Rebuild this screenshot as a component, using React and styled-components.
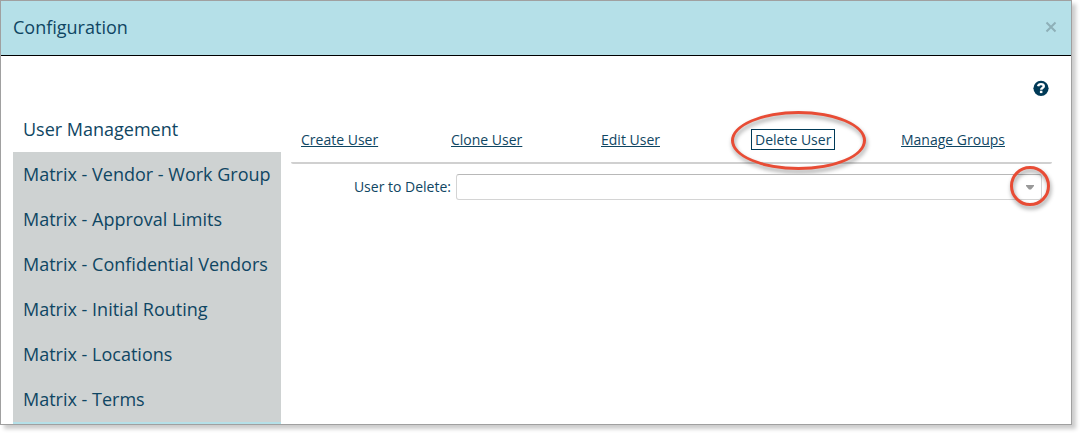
import React, { useState } from "react";
import styled, { createGlobalStyle } from "styled-components";

const GlobalStyle = createGlobalStyle`
  * {
    box-sizing: border-box;
  }

  body {
    margin: 0;
    background: #fff;
    color: #0f4663;
    font-family: "Open Sans", "Noto Sans", sans-serif;
  }
`;

const Dialog = styled.section`
  margin: 0 10px 10px 0;
  border: 1px solid #a0a0a0;
  background: #fff;
  box-shadow: 4px 4px 4px rgba(0, 0, 0, 0.2);
`;

const Header = styled.header`
  display: flex;
  align-items: center;
  justify-content: space-between;
  height: 55px;
  padding: 0 14px 2px 12px;
  background: #b5e0e8;
  border-bottom: 1px solid #000;
`;

const Title = styled.h1`
  margin: 0;
  font-size: 18px;
  font-weight: 400;
  line-height: 24px;
`;

const CloseButton = styled.button`
  display: flex;
  padding: 0;
  border: none;
  background: transparent;
  cursor: pointer;
`;

const Toolbar = styled.div`
  display: flex;
  justify-content: flex-end;
  padding: 24px 22px 11px;
`;

const HelpButton = styled(CloseButton)``;

const Content = styled.div`
  display: flex;
  gap: 10px;
  padding: 0 19px 0 12px;
`;

const SideNav = styled.nav`
  flex: 0 0 268px;
  border-bottom: 2px solid #b5e0e8;
`;

const SideLink = styled.a`
  display: block;
  padding: 10px;
  background: ${(props) => (props.$active ? "#fff" : "#ced2d2")};
  color: inherit;
  font-size: 18px;
  line-height: 25px;
  text-decoration: none;
  white-space: nowrap;
`;

const Main = styled.main`
  flex: 1;
  min-width: 0;
`;

const Tabs = styled.nav`
  display: flex;
  padding: 21px 0 12px 10px;
  border-bottom: 2px solid #d0d0d0;
  border-radius: 2px;
`;

const Tab = styled.div`
  position: relative;
  flex: 0 1 150px;
`;

const TabLink = styled.a`
  display: inline-block;
  padding: ${(props) => (props.$active ? "0 3px" : "1px 0")};
  border: ${(props) => (props.$active ? "1px solid #003a57" : "none")};
  color: inherit;
  font-size: 14px;
  line-height: 19px;
  text-decoration: ${(props) => (props.$active ? "none" : "underline")};
  white-space: nowrap;
`;

const Field = styled.div`
  display: flex;
  align-items: center;
  gap: 5px;
  padding: 10px 10px 0 0;
`;

const Label = styled.label`
  flex: 0 0 160px;
  font-size: 14px;
  line-height: 20px;
  text-align: right;
`;

const SelectBox = styled.div`
  position: relative;
  flex: 1;
`;

const Select = styled.select`
  display: block;
  width: 100%;
  height: 26px;
  padding: 0 24px 0 6px;
  appearance: none;
  border: 1px solid #d4d4d4;
  border-top-color: #b8b8b8;
  border-radius: 3px;
  background: #fff;
  color: inherit;
  font: inherit;
  font-size: 14px;
`;

const Arrow = styled.svg`
  position: absolute;
  top: 11px;
  right: 8px;
  pointer-events: none;
`;

// Red ring drawn over the control it points out
const Ring = styled.span`
  position: absolute;
  top: ${(props) => props.$top}px;
  ${(props) => props.$side}: ${(props) => props.$offset}px;
  width: ${(props) => props.$width}px;
  height: ${(props) => props.$height}px;
  border: 3px solid #e84c35;
  border-radius: 50%;
  filter: drop-shadow(1px 3px 2px rgba(0, 0, 0, 0.4));
  pointer-events: none;
`;

const sections = [
  "User Management",
  "Matrix - Vendor - Work Group",
  "Matrix - Approval Limits",
  "Matrix - Confidential Vendors",
  "Matrix - Initial Routing",
  "Matrix - Locations",
  "Matrix - Terms",
];

const tabs = [
  "Create User",
  "Clone User",
  "Edit User",
  "Delete User",
  "Manage Groups",
];

function App() {
  const [section, setSection] = useState("User Management");
  const [tab, setTab] = useState("Delete User");
  const [user, setUser] = useState("");

  return (
    <>
      <GlobalStyle />
      <Dialog>
        <Header>
          <Title>Configuration</Title>
          <CloseButton type="button" aria-label="Close">
            <svg width="12" height="12" viewBox="0 0 12 12">
              <path d="M1.5 1.5l9 9M10.5 1.5l-9 9" stroke="#8eb0b8" strokeWidth="2" />
            </svg>
          </CloseButton>
        </Header>
        <Toolbar>
          <HelpButton type="button" aria-label="Help">
            <svg width="16" height="16" viewBox="0 0 16 16">
              <circle cx="8" cy="8.3" r="7.6" fill="#003a57" />
              <path
                d="M5.1 6.3C5.4 4.8 6.4 4.1 8 4.1c1.7 0 2.8.9 2.8 2.2 0 1.9-2.6 1.7-2.6 3.5"
                fill="none"
                stroke="#fff"
                strokeWidth="2.4"
              />
              <rect x="6.9" y="10.7" width="2.5" height="2.4" fill="#fff" />
            </svg>
          </HelpButton>
        </Toolbar>
        <Content>
          <SideNav>
            {sections.map((name) => (
              <SideLink
                key={name}
                href="#"
                $active={name === section}
                onClick={() => setSection(name)}
              >
                {name}
              </SideLink>
            ))}
          </SideNav>
          <Main>
            <Tabs>
              {tabs.map((name) => (
                <Tab key={name}>
                  <TabLink
                    href="#"
                    $active={name === tab}
                    onClick={() => setTab(name)}
                  >
                    {name}
                  </TabLink>
                  {name === "Delete User" && (
                    <Ring $top={-17} $side="left" $offset={-20} $width={135} $height={59} />
                  )}
                </Tab>
              ))}
            </Tabs>
            <Field>
              <Label htmlFor="user">User to Delete:</Label>
              <SelectBox>
                <Select
                  id="user"
                  value={user}
                  onChange={(e) => setUser(e.target.value)}
                >
                  <option value=""></option>
                </Select>
                <Arrow width="8" height="5" viewBox="0 0 8 5">
                  <path d="M0 0h8v1L5 4.5H3L0 1z" fill="#999" />
                </Arrow>
                <Ring $top={-8} $side="right" $offset={-8} $width={40} $height={40} />
              </SelectBox>
            </Field>
          </Main>
        </Content>
      </Dialog>
    </>
  );
}

export default App;
